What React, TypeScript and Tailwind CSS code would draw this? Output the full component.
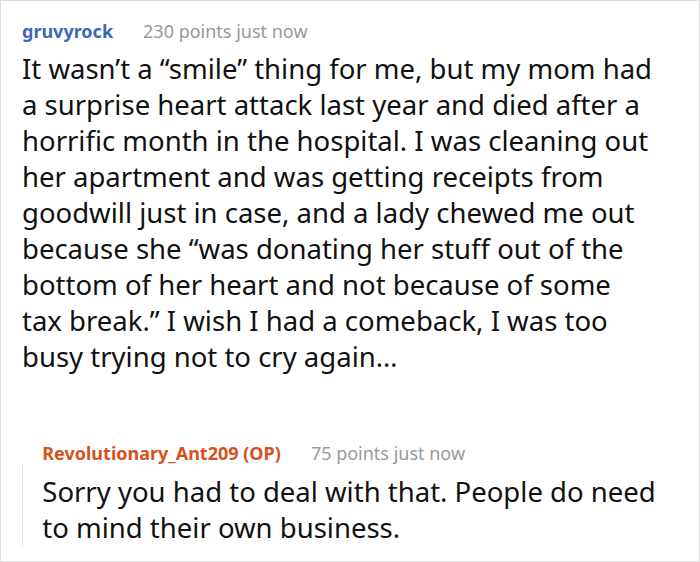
const font = { fontFamily: '"Noto Sans", "Open Sans", sans-serif' };

function Meta({ name, color, points }: { name: string; color: string; points: string }) {
  return (
    <div className="flex items-center gap-[30px] text-[18px] leading-[24px]">
      <span className={`font-bold ${color}`}>{name}</span>
      <span className="text-[#999999]">{points}</span>
    </div>
  );
}

export default function App() {
  return (
    <div
      style={font}
      className="w-[700px] h-[562px] border border-[#dddddd] bg-white pl-[21px] pr-[30px] pt-[18px] overflow-hidden"
    >
      <Meta name="gruvyrock" color="text-[#3b69b8]" points="230 points just now" />
      <p className="mt-[8px] w-[633px] text-[27.5px] leading-[36px] text-[#111111]">
        It wasn’t a “smile” thing for me, but my mom had a surprise heart attack last year and died after a
        horrific month in the hospital. I was cleaning out her apartment and was getting receipts from
        goodwill just in case, and a lady chewed me out because she “was donating her stuff out of the
        bottom of her heart and not because of some tax break.” I wish I had a comeback, I was too busy
        trying not to cry again…
      </p>
      <div className="mt-[78px] flex">
        <div className="w-[2px] bg-[#e8e8e8] mt-[10px]" />
        <div className="pl-[19px] -mt-[12px]">
          <Meta name="Revolutionary_Ant209 (OP)" color="text-[#d4521e]" points="75 points just now" />
          <p className="mt-[9px] text-[27.5px] leading-[36px] text-[#111111]">
            Sorry you had to deal with that. People do need to mind their own business.
          </p>
        </div>
      </div>
    </div>
  );
}
